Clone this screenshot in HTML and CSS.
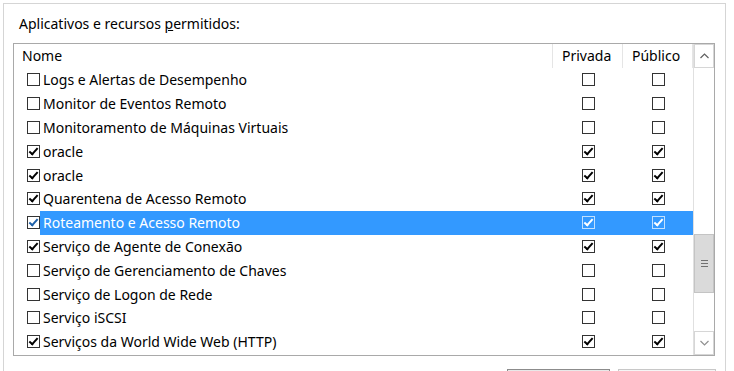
FILE: index.html
```html
<!DOCTYPE html>
<html>
<head>
<title>Aplicativos permitidos</title>
<link rel="stylesheet" href="styles.css">
</head>
<body>
<div class="group">
  <div class="title">Aplicativos e recursos <u>p</u>ermitidos:</div>
  <div class="list">
    <div class="grid">
      <div class="head">
        <div class="hcell name">Nome</div>
        <div class="hcell">Privada</div>
        <div class="hcell">Público</div>
      </div>
      <div class="row"><div class="cell name"><span class="cb"></span>Logs e Alertas de Desempenho</div><div class="cell"><span class="cb"></span></div><div class="cell"><span class="cb"></span></div></div>
      <div class="row"><div class="cell name"><span class="cb"></span>Monitor de Eventos Remoto</div><div class="cell"><span class="cb"></span></div><div class="cell"><span class="cb"></span></div></div>
      <div class="row"><div class="cell name"><span class="cb"></span>Monitoramento de Máquinas Virtuais</div><div class="cell"><span class="cb"></span></div><div class="cell"><span class="cb"></span></div></div>
      <div class="row"><div class="cell name"><span class="cb on"></span>oracle</div><div class="cell"><span class="cb on"></span></div><div class="cell"><span class="cb on"></span></div></div>
      <div class="row"><div class="cell name"><span class="cb on"></span>oracle</div><div class="cell"><span class="cb on"></span></div><div class="cell"><span class="cb on"></span></div></div>
      <div class="row"><div class="cell name"><span class="cb on"></span>Quarentena de Acesso Remoto</div><div class="cell"><span class="cb on"></span></div><div class="cell"><span class="cb on"></span></div></div>
      <div class="row selected"><div class="cell name"><span class="cb on"></span><span class="label">Roteamento e Acesso Remoto</span></div><div class="cell"><span class="cb on"></span></div><div class="cell"><span class="cb on"></span></div></div>
      <div class="row"><div class="cell name"><span class="cb on"></span>Serviço de Agente de Conexão</div><div class="cell"><span class="cb on"></span></div><div class="cell"><span class="cb on"></span></div></div>
      <div class="row"><div class="cell name"><span class="cb"></span>Serviço de Gerenciamento de Chaves</div><div class="cell"><span class="cb"></span></div><div class="cell"><span class="cb"></span></div></div>
      <div class="row"><div class="cell name"><span class="cb"></span>Serviço de Logon de Rede</div><div class="cell"><span class="cb"></span></div><div class="cell"><span class="cb"></span></div></div>
      <div class="row"><div class="cell name"><span class="cb"></span>Serviço iSCSI</div><div class="cell"><span class="cb"></span></div><div class="cell"><span class="cb"></span></div></div>
      <div class="row"><div class="cell name"><span class="cb on"></span>Serviços da World Wide Web (HTTP)</div><div class="cell"><span class="cb on"></span></div><div class="cell"><span class="cb on"></span></div></div>
    </div>
    <div class="scrollbar">
      <div class="arrow">
        <svg width="9" height="6" viewBox="0 0 9 6"><polyline points="0.5,5 4.5,1 8.5,5" fill="none" stroke="#606060" stroke-width="1.2"/></svg>
      </div>
      <div class="track">
        <div class="thumb"><span class="grip"></span></div>
      </div>
      <div class="arrow">
        <svg width="9" height="6" viewBox="0 0 9 6"><polyline points="0.5,1 4.5,5 8.5,1" fill="none" stroke="#909090" stroke-width="1.2"/></svg>
      </div>
    </div>
  </div>
  <div class="buttons">
    <div class="btn first"></div>
    <div class="btn"></div>
  </div>
</div>
</body>
</html>
```
FILE: styles.css
```css
html,body{
  height:371px;
  overflow:hidden;
}
body{
  margin:0;
  background:#fff;
  font-family:"Noto Sans","Open Sans",sans-serif;
  font-size:14px;
  color:#000;
}
.group{
  margin:3px 0 0 3px;
  width:721px;
  height:367px;
  border:1px solid #d5d5d5;
  border-bottom:none;
  overflow:hidden;
}
.title{
  height:38px;
  line-height:38px;
  padding-left:15px;
  padding-top:1px;
}
.list{
  margin-left:9px;
  width:700px;
  height:311px;
  border:1px solid #a9a9a9;
  display:flex;
}
.grid{flex:1;}
.head,.row{
  display:grid;
  grid-template-columns:539px 70px 70px;
}
.head{height:24px;}
.hcell{
  line-height:24px;
  padding-left:9px;
  border-right:1px solid #e5e5e5;
}
.hcell.name{padding-left:8px;}
.row{height:23.8px;}
.cell{
  display:flex;
  align-items:center;
  justify-content:center;
}
.cell.name{
  justify-content:flex-start;
  padding-left:13px;
}
.cell.name .cb{margin-right:3px;}
.row.selected .cell{background:#3399ff;color:#fff;}
.row.selected .cell.name{background:linear-gradient(to right,#fff 26px,#3399ff 26px);}
.cb{
  width:13px;
  height:13px;
  box-sizing:border-box;
  border:1px solid #333;
  background:#fff;
  position:relative;
  flex:none;
}
.cb.on::after{
  content:"";
  position:absolute;
  left:3px;
  top:0;
  width:3px;
  height:7px;
  border:solid #000;
  border-width:0 2.5px 2.5px 0;
  transform:rotate(42deg);
}
.row.selected .cb{border-color:#bfe0ff;background:#3399ff;}
.row.selected .cell.name .cb{border-color:#333;background:#fff;}
.row.selected .cell.name .cb.on::after{border-color:#1c5fa8;}
.row.selected .cb.on::after{border-color:#fff;}
.scrollbar{
  width:21px;
  border-left:1px solid #e0e0e0;
  display:flex;
  flex-direction:column;
}
.arrow{
  height:22px;
  border:1px solid #d6d6d6;
  display:flex;
  align-items:center;
  justify-content:center;
  flex:none;
}
.track{
  flex:1;
  position:relative;
}
.thumb{
  position:absolute;
  left:0;
  right:0;
  top:166px;
  height:59px;
  background:#dadada;
  border:1px solid #c4c4c4;
  box-sizing:border-box;
  display:flex;
  align-items:center;
  justify-content:center;
}
.grip{
  width:7px;
  height:7px;
  background:repeating-linear-gradient(#707070 0 1px,transparent 1px 3px);
}
.buttons{
  display:flex;
  justify-content:flex-end;
  gap:8px;
  margin-top:13px;
  margin-right:9px;
}
.btn{
  width:101px;
  height:24px;
  border:1px solid #adadad;
  background:#e8e8e8;
}
.btn.first{border-color:#8c8c8c;}
.btn+.btn{width:96px;background:#f5f5f5;border-color:#c8c8c8;}
```
